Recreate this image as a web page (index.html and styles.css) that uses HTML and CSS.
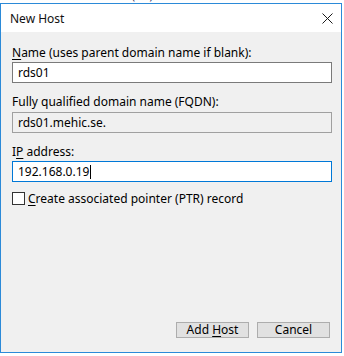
FILE: index.html
```html
<!DOCTYPE html>
<html lang="en">
<head>
    <meta charset="UTF-8">
    <title>New Host</title>
    <link rel="stylesheet" href="styles.css">
</head>
<body>
    <!-- list behind the dialog, mostly hidden -->
    <div class="backdrop">
        <span class="col-name">Name Server (NS)</span>
        <span class="col-data">router</span>
    </div>

    <div class="window">
        <div class="titlebar">
            <span class="title">New Host</span>
            <svg class="close" width="11" height="11" viewBox="0 0 11 11">
                <path d="M0.5 0.5 L10.5 10.5 M10.5 0.5 L0.5 10.5" stroke="#1a1a1a" stroke-width="1" fill="none"/>
            </svg>
        </div>

        <div class="content">
            <label class="label first"><u>N</u>ame (uses parent domain name if blank):</label>
            <div class="field">rds01</div>

            <label class="label">Fully qualified domain name (FQDN):</label>
            <div class="field readonly">rds01.mehic.se.</div>

            <label class="label">I<u>P</u> address:</label>
            <div class="field focused">192.168.0.19<span class="caret"></span></div>

            <div class="check-row">
                <span class="checkbox"></span>
                <span><u>C</u>reate associated pointer (PTR) record</span>
            </div>

            <div class="buttons">
                <button>Add <u>H</u>ost</button>
                <button>Cancel</button>
            </div>
        </div>
    </div>
</body>
</html>
```

FILE: styles.css
```css
body {
    margin: 0;
    background: #ffffff;
    font-family: 'Noto Sans', 'Open Sans', sans-serif;
    font-size: 12px;
    color: #000000;
    overflow: hidden;
}
u {
    text-decoration-thickness: 1px;
    text-underline-offset: 2px;
}
.backdrop {
    height: 3px;
    overflow: hidden;
    display: flex;
    align-items: flex-end;
    padding-left: 62px;
    color: #1a2a5a;
    font-size: 11px;
    line-height: 14px;
}
.col-data {
    margin-left: 82px;
}
.window {
    width: 340px;
    height: 348px;
    border: 1px solid #2b8ad8;
    display: flex;
    flex-direction: column;
    background: #f0f0f0;
}
.titlebar {
    height: 28px;
    background: #ffffff;
    display: flex;
    align-items: center;
    justify-content: space-between;
    padding: 0 8px 0 9px;
}
.title {
    font-size: 12px;
    color: #111111;
}
.close {
    margin-top: 1px;
}
.content {
    flex: 1;
    display: flex;
    flex-direction: column;
    padding: 0 9px 14px 11px;
}
.label {
    line-height: 15px;
    margin-top: 11px;
    margin-bottom: 2px;
}
.label.first {
    margin-top: 13px;
}
.field {
    height: 19px;
    line-height: 19px;
    border: 1px solid #7a7a7a;
    background: #ffffff;
    padding-left: 5px;
    display: flex;
    align-items: center;
}
.field.readonly {
    background: #f0f0f0;
    border-color: #a0a0a0;
    margin-top: 1px;
}
.field.focused {
    border-color: #0078d7;
}
.caret {
    width: 1px;
    height: 14px;
    background: #000000;
    margin-left: 1px;
}
.check-row {
    display: flex;
    align-items: center;
    gap: 3px;
    margin-top: 9px;
    line-height: 15px;
}
.checkbox {
    width: 11px;
    height: 11px;
    border: 1px solid #333333;
    background: #ffffff;
}
.buttons {
    margin-top: auto;
    display: flex;
    justify-content: flex-end;
    gap: 8px;
    padding-right: 2px;
}
button {
    width: 73px;
    height: 16px;
    padding: 0;
    font-family: inherit;
    font-size: 12px;
    line-height: 14px;
    color: #000000;
    background: #e1e1e1;
    border: 1px solid #adadad;
}
```
